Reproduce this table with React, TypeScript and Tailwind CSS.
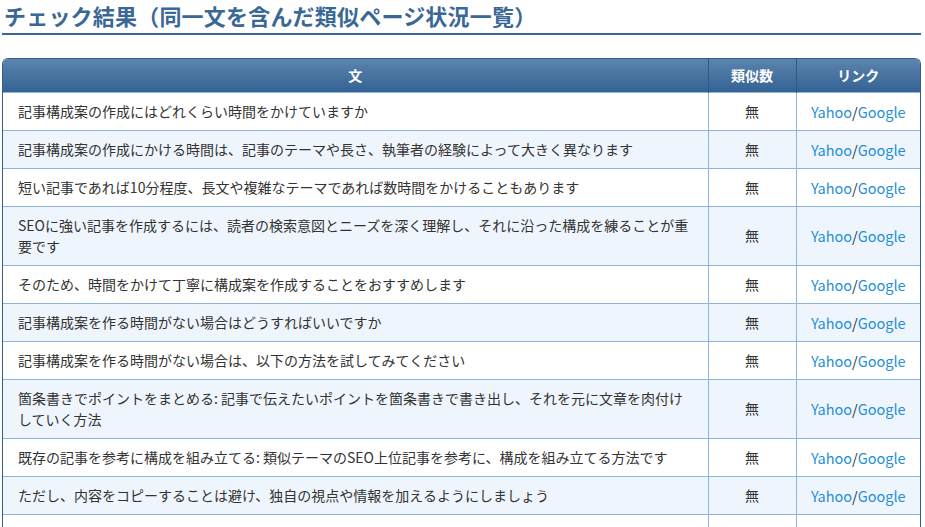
import React from "react";

const rows: string[] = [
  "記事構成案の作成にはどれくらい時間をかけていますか",
  "記事構成案の作成にかける時間は、記事のテーマや長さ、執筆者の経験によって大きく異なります",
  "短い記事であれば10分程度、長文や複雑なテーマであれば数時間をかけることもあります",
  "SEOに強い記事を作成するには、読者の検索意図とニーズを深く理解し、それに沿った構成を練ることが重要です",
  "そのため、時間をかけて丁寧に構成案を作成することをおすすめします",
  "記事構成案を作る時間がない場合はどうすればいいですか",
  "記事構成案を作る時間がない場合は、以下の方法を試してみてください",
  "箇条書きでポイントをまとめる: 記事で伝えたいポイントを箇条書きで書き出し、それを元に文章を肉付けしていく方法",
  "既存の記事を参考に構成を組み立てる: 類似テーマのSEO上位記事を参考に、構成を組み立てる方法です",
  "ただし、内容をコピーすることは避け、独自の視点や情報を加えるようにしましょう",
  "テンプレートを活用する: 記事構成のテンプレートを用意しておけば、構成案作成の時間を大幅に短縮できます",
];

export default function App() {
  return (
    <div
      className="w-[925px] h-[527px] overflow-hidden bg-white"
      style={{ fontFamily: '"Noto Sans CJK JP", "Noto Sans", sans-serif' }}
    >
      <div className="pl-[2px] pr-[4px]">
        <h1 className="text-[22px] leading-[30px] font-bold text-[#3a6896] pl-[2px] border-b-2 border-[#3a6896] pb-[3px] tracking-[0.2px]">
          チェック結果（同一文を含んだ類似ページ状況一覧）
        </h1>
        <div className="mt-[23px] rounded-t-[6px] overflow-hidden border border-[#2f5f8f] border-b-0">
          <table className="w-full table-fixed border-collapse text-[14px] text-[#333]">
            <colgroup>
              <col className="w-[705px]" />
              <col className="w-[88px]" />
              <col />
            </colgroup>
            <thead>
              <tr className="bg-gradient-to-b from-[#5c84ad] to-[#336394] text-white">
                <th className="h-[33px] font-bold text-[14px] border-r border-[#2c5a88]">文</th>
                <th className="h-[33px] font-bold text-[14px] border-r border-[#2c5a88]">類似数</th>
                <th className="h-[33px] font-bold text-[14px]">リンク</th>
              </tr>
            </thead>
            <tbody>
              {rows.map((r, i) => (
                <tr key={i} className={i % 2 === 1 ? "bg-[#eff5fc]" : "bg-white"}>
                  <td className="border border-[#8db4de] border-l-0 px-[15px] py-[8px] leading-[21px] align-middle">
                    {r}
                  </td>
                  <td className="border border-[#8db4de] text-center align-middle leading-[21px]">無</td>
                  <td className="border border-[#8db4de] border-r-0 text-center align-middle leading-[21px] text-[14.5px] text-[#1f8fd8]">
                    Yahoo<span className="text-[#333]">/</span>Google
                  </td>
                </tr>
              ))}
            </tbody>
          </table>
        </div>
      </div>
    </div>
  );
}
